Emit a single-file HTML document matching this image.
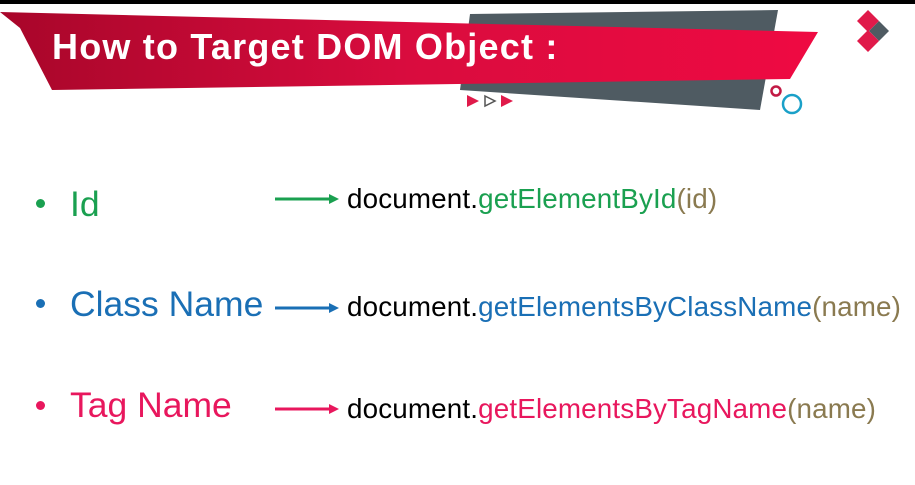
<!DOCTYPE html>
<html><head><style>
body{margin:0;width:915px;height:485px;background:#fff;position:relative;overflow:hidden;font-family:"Liberation Sans",sans-serif}
.t{position:absolute;white-space:nowrap}
.lab{font-size:35.5px;left:70px}
.code{font-size:27.8px;left:347px;color:#000;letter-spacing:0.15px}
.dot{position:absolute;width:9px;height:9px;border-radius:50%}
</style></head><body>
<div style="position:absolute;left:0;top:0;width:915px;height:4px;background:#000"></div>
<svg width="915" height="130" style="position:absolute;left:0;top:0">
<defs><linearGradient id="g" x1="0" x2="1"><stop offset="0" stop-color="#a8062a"/><stop offset="0.5" stop-color="#d90c3e"/><stop offset="1" stop-color="#ef0a42"/></linearGradient></defs>
<polygon points="470,14 778,10 760,110 460,90" fill="#4f5b62"/>
<polygon points="0,12 818,32 790,79 52,90 20,28" fill="url(#g)"/>
<polygon points="467,95 479,101 467,107" fill="#e01a4a"/>
<polygon points="485,96 495,101 485,106" fill="none" stroke="#555" stroke-width="1.5"/>
<polygon points="501,95 513,101 501,107" fill="#e01a4a"/>
<circle cx="776" cy="91" r="4.5" fill="none" stroke="#c21a45" stroke-width="2.5"/>
<circle cx="792" cy="104" r="9" fill="none" stroke="#1aa0c8" stroke-width="2.5"/>
<polygon points="868,10 879,21 868,32 857,21" fill="#e01a4a"/>
<polygon points="879,21 889,31 879,41 869,31" fill="#4f5b62"/>
<polygon points="868,30 879,41 868,52 857,41" fill="#e01a4a"/>
</svg>
<div class="t" style="left:52px;top:26px;font-size:36px;font-weight:bold;color:#fff;letter-spacing:1.2px">How to Target DOM Object :</div>

<div class="dot" style="left:36px;top:199px;background:#1aa050"></div>
<div class="t lab" style="top:184px;color:#1aa050">Id</div>
<svg width="70" height="12" style="position:absolute;left:275px;top:193px"><line x1="0" y1="6" x2="56" y2="6" stroke="#1aa050" stroke-width="3"/><polygon points="54,1 64,6 54,11" fill="#1aa050"/></svg>
<div class="t code" style="top:183px">document.<span style="color:#1aa050">getElementById</span><span style="color:#8a7a50">(id)</span></div>

<div class="dot" style="left:36px;top:299px;background:#1a6fb5"></div>
<div class="t lab" style="top:284px;color:#1a6fb5">Class Name</div>
<svg width="70" height="12" style="position:absolute;left:275px;top:302px"><line x1="0" y1="6" x2="56" y2="6" stroke="#1a6fb5" stroke-width="3"/><polygon points="54,1 64,6 54,11" fill="#1a6fb5"/></svg>
<div class="t code" style="top:291px">document.<span style="color:#1a6fb5">getElementsByClassName</span><span style="color:#8a7a50">(name)</span></div>

<div class="dot" style="left:36px;top:401px;background:#e8175d"></div>
<div class="t lab" style="top:385px;color:#e8175d">Tag Name</div>
<svg width="70" height="12" style="position:absolute;left:275px;top:403px"><line x1="0" y1="6" x2="56" y2="6" stroke="#e8175d" stroke-width="3"/><polygon points="54,1 64,6 54,11" fill="#e8175d"/></svg>
<div class="t code" style="top:393px">document.<span style="color:#e8175d">getElementsByTagName</span><span style="color:#8a7a50">(name)</span></div>
</body></html>
